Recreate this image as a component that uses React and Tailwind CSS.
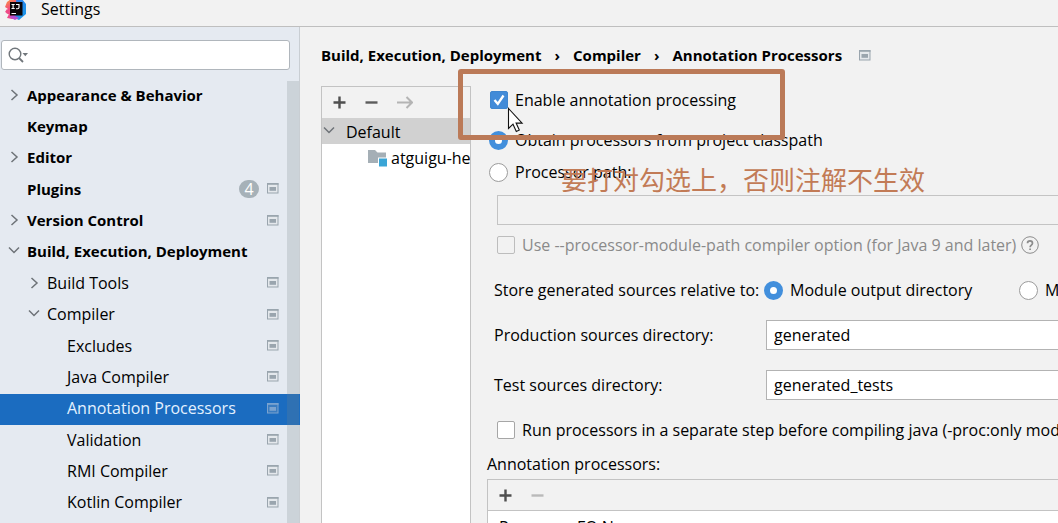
import React from "react";

const TREE = [
  { label: "Appearance & Behavior", level: 0, arrow: "right" },
  { label: "Keymap", level: 0 },
  { label: "Editor", level: 0, arrow: "right" },
  { label: "Plugins", level: 0, badge: "4", scoped: true },
  { label: "Version Control", level: 0, arrow: "right", scoped: true },
  { label: "Build, Execution, Deployment", level: 0, arrow: "down" },
  { label: "Build Tools", level: 1, arrow: "right", scoped: true },
  { label: "Compiler", level: 1, arrow: "down", scoped: true },
  { label: "Excludes", level: 2, scoped: true },
  { label: "Java Compiler", level: 2, scoped: true },
  { label: "Annotation Processors", level: 2, scoped: true, selected: true },
  { label: "Validation", level: 2, scoped: true },
  { label: "RMI Compiler", level: 2, scoped: true },
  { label: "Kotlin Compiler", level: 2, scoped: true },
];

const INDENT = ["pl-2", "pl-7", "pl-12"];

function IdeaLogo() {
  return (
    <svg className="size-[22px] shrink-0" viewBox="0 0 22 22" aria-hidden="true">
      <defs>
        <linearGradient id="warm" x1="0" y1="0" x2="0.4" y2="1">
          <stop offset="0" stopColor="#f9a13a" />
          <stop offset="0.5" stopColor="#f4507a" />
          <stop offset="1" stopColor="#e8308c" />
        </linearGradient>
        <linearGradient id="cool" x1="0" y1="0" x2="1" y2="1">
          <stop offset="0" stopColor="#3b7bf0" />
          <stop offset="1" stopColor="#159be8" />
        </linearGradient>
      </defs>
      <path d="M2 4 6 1l7 1v18l-4 1-5-1 1-3-4-2 2-4-3-2z" fill="url(#warm)" />
      <path d="M2 11 0 14l4 2-2 4 6 1 4-3z" fill="#ee4a86" />
      <path d="M11 1h6l4 5v10l-7 6-7-3 5-3z" fill="url(#cool)" />
      <path d="m4 19 4-2 6 3-4 2z" fill="#b74fd0" />
      <rect x="5" y="4" width="12.500" height="13.500" fill="#0a0508" />
      <path d="M6.500 6.500h3.200M8.100 6.500v4M6.500 10.500h3.200M11 6.500h3v3q0 1.200-1.400 1.200H11M6.500 15.500H11" stroke="#fff" strokeWidth="1.100" fill="none" />
    </svg>
  );
}

function Chevron({ dir }) {
  return (
    <svg className="size-3 shrink-0" viewBox="0 0 12 12" fill="none" stroke="#6e7378" strokeWidth="1.500" aria-hidden="true">
      {dir === "right" && <path d="M3.500 1 9 6l-5.500 5" />}
      {dir === "down" && <path d="M1 2.500 6 7.500l5-5" />}
    </svg>
  );
}

function ScopeIcon({ selected }) {
  const c = selected ? "#7ba3cf" : "#9aa5ae";
  return (
    <svg className="h-[11px] w-3 shrink-0" viewBox="0 0 12 11" aria-hidden="true">
      <rect x="0.500" y="0.500" width="10.500" height="9.500" fill={selected ? "#3a7cc0" : "#e4e8ec"} stroke={c} />
      <path d="M0 1h11.500" stroke={c} strokeWidth="1.600" />
      <rect x="2.500" y="4" width="6.500" height="3.800" fill={c} />
    </svg>
  );
}

function Plus() {
  return (
    <svg className="size-[13px]" viewBox="0 0 13 13" stroke="#4f4f4f" strokeWidth="2.400" aria-hidden="true">
      <path d="M6.500 0.500v12M0.500 6.500h12" />
    </svg>
  );
}

function Minus({ color }) {
  return (
    <svg className="size-[13px]" viewBox="0 0 13 13" stroke={color} strokeWidth="2.400" aria-hidden="true">
      <path d="M0.500 6.500h12" />
    </svg>
  );
}

function Checkbox({ label, checked = false, disabled = false }) {
  return (
    <label className={`flex h-7 items-center gap-[7px] ${disabled ? "text-[#8a8a8a]" : ""}`}>
      <span className="grid shrink-0 place-items-center">
        <input
          type="checkbox"
          defaultChecked={checked}
          disabled={disabled}
          className="peer col-start-1 row-start-1 size-[18px] appearance-none rounded-[2px] border border-[#a6a6a6] bg-white checked:border-[#3f86cf] checked:bg-[#428bd8] disabled:border-[#bdbdbd] disabled:bg-[#f2f2f2]"
        />
        <svg className="pointer-events-none col-start-1 row-start-1 hidden size-[18px] peer-checked:block" viewBox="0 0 18 18" fill="none" stroke="#fff" strokeWidth="2.300" aria-hidden="true">
          <path d="m4.500 9 3.300 3.800L13.500 4.500" />
        </svg>
      </span>
      <span>{label}</span>
    </label>
  );
}

function Radio({ label, name, checked = false }) {
  return (
    <label className="flex h-7 items-center gap-[7px]">
      <input
        type="radio"
        name={name}
        defaultChecked={checked}
        className="size-[19px] shrink-0 appearance-none rounded-full border border-[#9c9c9c] bg-white checked:border-[6px] checked:border-[#428fdc]"
      />
      <span>{label}</span>
    </label>
  );
}

function DirectoryField({ id, label, value, space }) {
  return (
    <div className={`ml-[7px] flex items-center ${space}`}>
      <label htmlFor={id} className="w-[272px] shrink-0">{label}</label>
      <input id={id} defaultValue={value} className="h-[30px] min-w-0 flex-1 border border-r-0 border-[#b3b3b3] bg-white px-[7px] outline-none" />
    </div>
  );
}

function Sidebar() {
  return (
    <aside className="relative flex w-[300px] shrink-0 flex-col border-r border-[#c9ced3] bg-[#e5eaf1] pt-[13px]">
      <label className="ml-px mr-[9px] flex h-[30px] items-center rounded-[3px] border border-[#b0b6bc] bg-white pl-1.5">
        <svg className="h-4 w-5 shrink-0" viewBox="0 0 20 16" fill="none" stroke="#70767b" strokeWidth="1.400" aria-hidden="true">
          <circle cx="7" cy="7" r="5.800" />
          <path d="m11 11 4 4" strokeWidth="1.800" />
          <path d="M14.500 6H20l-2.700 3.200z" fill="#70767b" stroke="none" />
        </svg>
        <input type="text" aria-label="Search settings" className="min-w-0 flex-1 bg-transparent px-1 outline-none" />
      </label>
      <nav className="-mr-px mt-[10px] h-[439px] shrink-0">
        <ul className="flex h-full flex-col">
          {TREE.map((n) => (
            <li key={n.label} className="min-h-0 flex-1">
              <a
                href="#"
                className={`flex h-full items-center pb-0.5 pr-[21px] ${INDENT[n.level]} ${n.selected ? "bg-[#1b6cc0] text-[#e3f1ff]" : ""} ${n.level === 0 ? "text-[15px] font-bold" : ""}`}
              >
                <Chevron dir={n.arrow} />
                <span className="ml-[7px] flex-1 whitespace-nowrap">{n.label}</span>
                {n.badge && (
                  <span className="mr-2 flex h-[18px] w-5 items-center justify-center rounded-full bg-[#a6b1b8] text-base font-normal text-white">{n.badge}</span>
                )}
                {n.scoped && <ScopeIcon selected={n.selected} />}
              </a>
            </li>
          ))}
        </ul>
      </nav>
      <div className="absolute bottom-0 right-0 top-[54px] w-3 bg-[#788486]/22" />
    </aside>
  );
}

function ProfilePanel() {
  return (
    <section className="flex w-[150px] shrink-0 flex-col overflow-hidden border border-b-0 border-[#c3c3c3] bg-white">
      <div className="flex h-[31px] shrink-0 items-center gap-[19px] bg-[#f2f2f2] pl-[11px]">
        <button aria-label="Add profile"><Plus /></button>
        <button aria-label="Remove profile"><Minus color="#5c5c5c" /></button>
        <button aria-label="Move to">
          <svg className="h-[13px] w-4" viewBox="0 0 16 13" fill="none" stroke="#b4b4b4" strokeWidth="2" aria-hidden="true">
            <path d="M0 6.500h15M9.500 1l5.500 5.500L9.500 12" />
          </svg>
        </button>
      </div>
      <div className="flex h-[26px] shrink-0 items-center gap-[11px] bg-[#d1d1d1] pl-px">
        <Chevron dir="down" />
        <span className="pt-0.5">Default</span>
      </div>
      <div className="flex h-[27px] shrink-0 items-center gap-[3px] pl-[46px]">
        <svg className="h-[18px] w-5 shrink-0" viewBox="0 0 20 18" aria-hidden="true">
          <path d="M0 1h7l2.500 2.500H18V14H0z" fill="#a5afb6" />
          <rect x="10" y="8.500" width="10" height="9.500" fill="#fff" />
          <rect x="11" y="9.500" width="8" height="8" fill="#3aa5d6" />
        </svg>
        <span className="whitespace-nowrap">atguigu-hello</span>
      </div>
    </section>
  );
}

function Options() {
  return (
    <form className="flex min-w-0 flex-1 flex-col overflow-hidden whitespace-nowrap pl-4">
      <div className="ml-[3px]">
        <Checkbox label="Enable annotation processing" checked />
      </div>
      <div className="ml-[2px] mt-3">
        <Radio name="source" label="Obtain processors from project classpath" checked />
      </div>
      <div className="ml-[2px] mt-1">
        <Radio name="source" label="Processor path:" />
      </div>
      <input aria-label="Processor path" disabled className="ml-[10px] mt-[9px] h-[30px] shrink-0 border border-r-0 border-[#c4c4c4] bg-[#f2f2f2]" />
      <div className="ml-[10px] mt-1.5 flex items-center gap-[5px]">
        <Checkbox label="Use --processor-module-path compiler option (for Java 9 and later)" disabled />
        <button type="button" aria-label="Help">
          <svg className="size-[18px]" viewBox="0 0 18 18" fill="none" stroke="#8c8c8c" aria-hidden="true">
            <circle cx="9" cy="9" r="8.300" />
            <path d="M6.500 7.200c0-3.200 5-3.200 5 0 0 1.800-2.400 1.900-2.400 4M9.100 12.400v1.600" strokeWidth="1.700" />
          </svg>
        </button>
      </div>
      <div className="ml-[7px] mt-[17px] flex items-center">
        <span className="w-[270px] shrink-0">Store generated sources relative to:</span>
        <span className="w-[255px] shrink-0">
          <Radio name="store" label="Module output directory" checked />
        </span>
        <Radio name="store" label="Module content root" />
      </div>
      <DirectoryField id="production" label="Production sources directory:" value="generated" space="mt-4" />
      <DirectoryField id="tests" label="Test sources directory:" value="generated_tests" space="mt-5" />
      <div className="ml-[10px] mt-4">
        <Checkbox label="Run processors in a separate step before compiling java (-proc:only mode)" />
      </div>
      <h2 className="mt-1.5 flex h-7 shrink-0 items-center">Annotation processors:</h2>
      <section className="mt-px min-h-0 flex-1 overflow-hidden border-l border-t border-[#c3c3c3] bg-white">
        <div className="flex h-[31px] items-center gap-[19px] border-b border-[#c3c3c3] bg-[#f2f2f2] pl-[11px]">
          <button type="button" aria-label="Add processor"><Plus /></button>
          <button type="button" aria-label="Remove processor"><Minus color="#bababa" /></button>
        </div>
        <table className="w-full text-left">
          <thead>
            <tr>
              <th className="pl-[11px] pt-1.5 font-normal">Processor FQ Name</th>
            </tr>
          </thead>
        </table>
      </section>
    </form>
  );
}

export default function App() {
  return (
    <div className="relative flex h-screen flex-col overflow-hidden bg-[#f2f2f2] font-['Open_Sans','Noto_Sans_CJK_SC',sans-serif] text-base leading-5 text-black">
      <header className="flex h-[27px] shrink-0 items-center gap-[14px] border-b border-[#bfbfbf] pb-2 pl-[5px]">
        <IdeaLogo />
        <h1>Settings</h1>
      </header>
      <div className="flex min-h-0 flex-1">
        <Sidebar />
        <main className="flex min-w-0 flex-1 flex-col pl-[21px]">
          <nav className="flex h-[59px] shrink-0 items-center gap-[13px] whitespace-nowrap pb-1 text-[15px] font-bold">
            <a href="#">Build, Execution, Deployment</a>
            <span>›</span>
            <a href="#">Compiler</a>
            <span>›</span>
            <a href="#">Annotation Processors</a>
            <span className="ml-1 pt-0.5"><ScopeIcon /></span>
          </nav>
          <div className="flex min-h-0 flex-1">
            <ProfilePanel />
            <Options />
          </div>
        </main>
      </div>
      <div className="pointer-events-none absolute left-[458px] top-[69px] h-[71px] w-[327px] rounded-[3px] border-[5px] border-[#bb7a58]" />
      <p className="pointer-events-none absolute left-[561px] top-[159px] whitespace-nowrap font-['Noto_Sans_CJK_SC',sans-serif] text-[26px] leading-10 text-[#c27b56]">
        要打对勾选上，否则注解不生效
      </p>
      <svg className="pointer-events-none absolute left-[507px] top-[107px] h-[26px] w-[17px]" viewBox="0 0 17 26" aria-hidden="true">
        <path d="M1.500 1.500v20l4.500-4.300 3.300 7.300 3-1.400-3.200-7h6z" fill="#fff" stroke="#111" strokeWidth="1.100" />
      </svg>
    </div>
  );
}
